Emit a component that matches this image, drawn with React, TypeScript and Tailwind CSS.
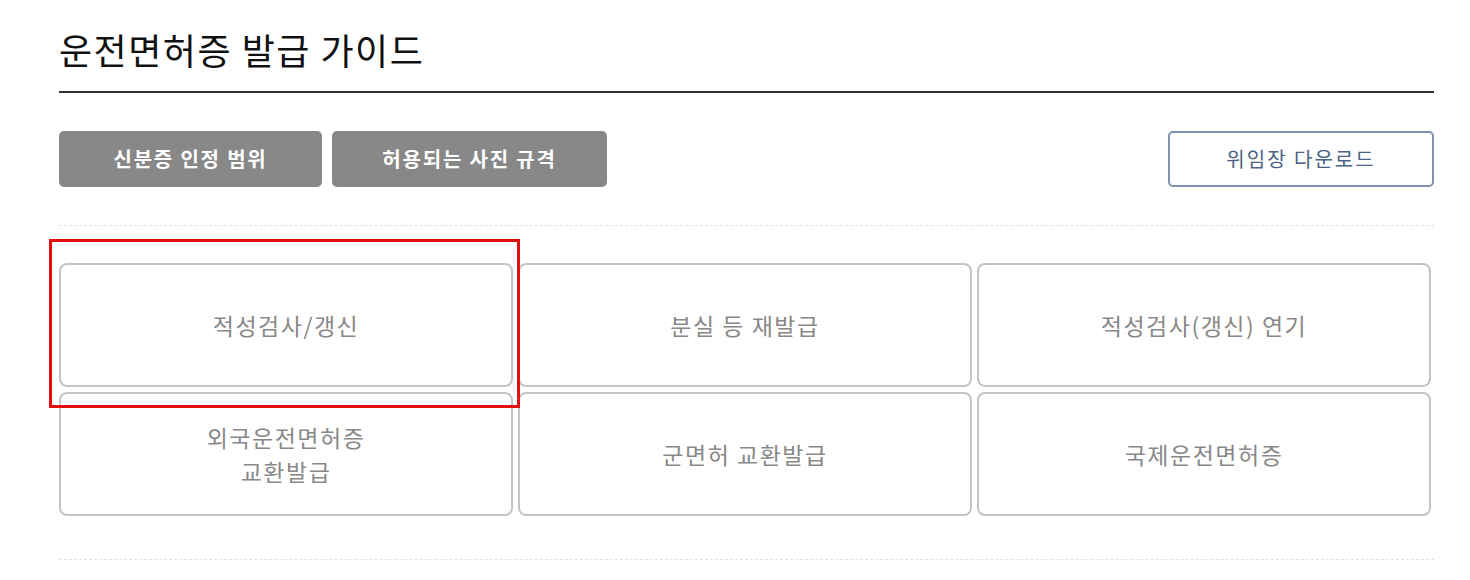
const font = { fontFamily: '"Noto Sans CJK KR", "Noto Sans", sans-serif' };

const cards: string[][] = [
  ["적성검사/갱신"],
  ["분실 등 재발급"],
  ["적성검사(갱신) 연기"],
  ["외국운전면허증", "교환발급"],
  ["군면허 교환발급"],
  ["국제운전면허증"],
];

function App() {
  return (
    <div className="relative min-h-[580px] bg-white" style={font}>
      <div className="ml-[59px] w-[1375px]">
        <h1 className="pt-[24px] pb-[17px] text-[36px] leading-[50px] font-normal tracking-[1.5px] text-[#111]">
          운전면허증 발급 가이드
        </h1>
        <div className="h-[2px] bg-[#333]" />

        <div className="mt-[38px] flex items-center justify-between">
          <div className="flex gap-[10px]">
            <button className="h-[56px] w-[263px] rounded-[5px] bg-[#888] text-[20px] font-bold tracking-[1.8px] text-white">
              신분증 인정 범위
            </button>
            <button className="h-[56px] w-[275px] rounded-[5px] bg-[#888] text-[20px] font-bold tracking-[1.8px] text-white">
              허용되는 사진 규격
            </button>
          </div>
          <button className="h-[56px] w-[266px] rounded-[5px] border-2 border-[#7d93b0] bg-white text-[20px] tracking-[2px] text-[#4a6285]">
            위임장 다운로드
          </button>
        </div>

        <div className="mt-[38px] border-t border-dashed border-[#e2e2e2]" />

        <div className="mt-[37px] grid w-[1372px] grid-cols-3 gap-x-[5px] gap-y-[5px]">
          {cards.map((lines) => (
            <div
              key={lines.join("")}
              className="flex h-[124px] flex-col items-center justify-center rounded-[8px] border-2 border-[#c4c4c4] text-[23px] leading-[34px] tracking-[1.5px] text-[#888]"
            >
              {lines.map((l) => (
                <span key={l}>{l}</span>
              ))}
            </div>
          ))}
        </div>

        <div className="mt-[43px] border-t border-dashed border-[#e2e2e2]" />
      </div>

      <div className="pointer-events-none absolute left-[49px] top-[239px] h-[169px] w-[471px] border-[3px] border-[#e31010]" />
    </div>
  );
}

export default App;
